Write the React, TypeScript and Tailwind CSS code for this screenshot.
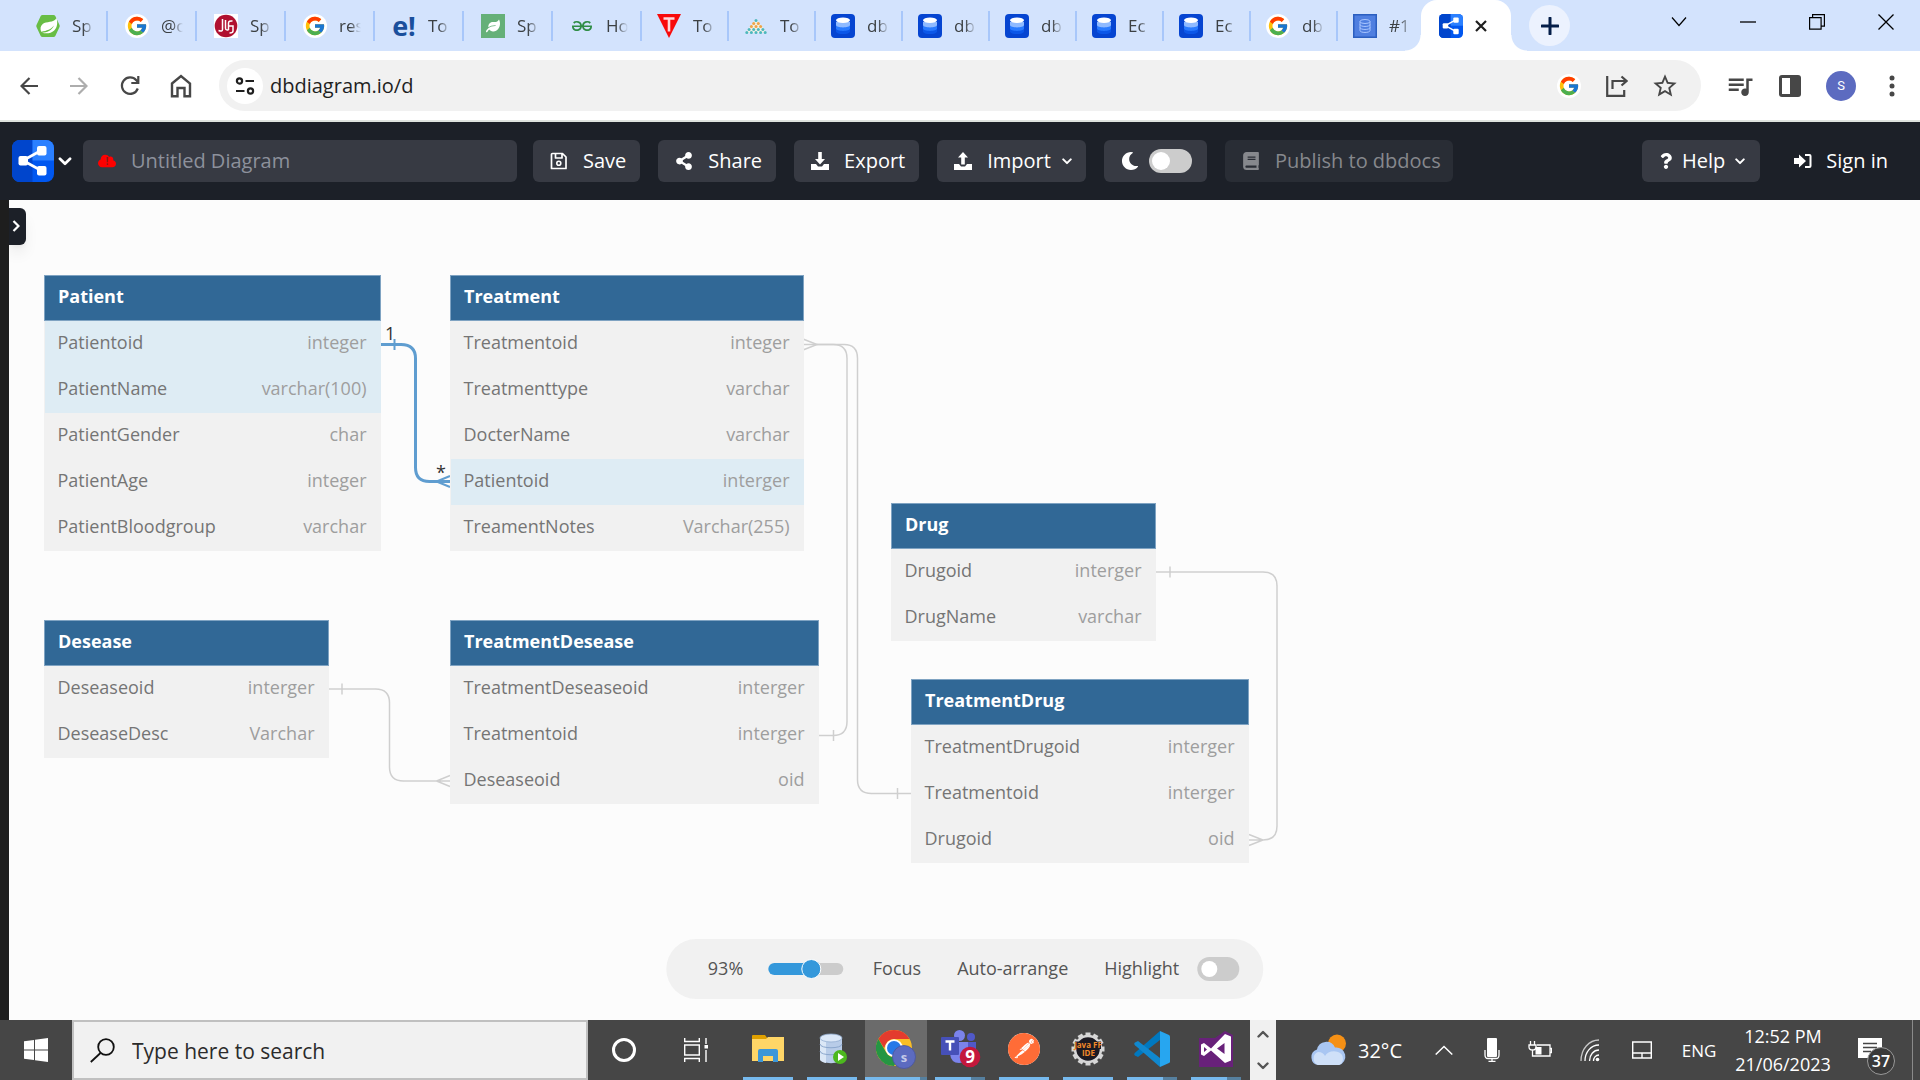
import React from "react";
import { FcGoogle } from "react-icons/fc";
import { SiGeeksforgeeks, SiPostman } from "react-icons/si";
import {
  FaShareAlt,
  FaMoon,
  FaCloud,
  FaBook,
  FaQuestion,
  FaLeaf,
} from "react-icons/fa";
import { MdQueueMusic, MdStarBorder } from "react-icons/md";

/* ---------- Icons ---------- */

function DiagramLogo({ className }: { className: string }) {
  return (
    <svg viewBox="0 0 42 42" className={className} aria-hidden="true">
      <clipPath id="logoClip">
        <rect width="42" height="42" rx="8" />
      </clipPath>
      <g clipPath="url(#logoClip)">
        <rect width="42" height="42" fill="#0057f0" />
        <rect width="20.5" height="42" fill="#0045cc" />
        <rect x="20.5" width="21.5" height="20.5" fill="#2b80ff" />
      </g>
      <path d="M11 20.5 30 10M11 20.5 30 31" stroke="#fff" strokeWidth="2.6" />
      <rect x="6.5" y="16" width="9.5" height="9.5" rx="2" fill="#fff" />
      <rect x="25" y="6" width="9.5" height="9.5" rx="2" fill="#fff" />
      <rect x="25" y="26" width="9.5" height="9.5" rx="2" fill="#fff" />
    </svg>
  );
}

function GoogleMark() {
  return (
    <span className="flex size-6 items-center justify-center rounded-full bg-white">
      <FcGoogle className="size-[22px]" />
    </span>
  );
}

function SpringMark() {
  return (
    <svg viewBox="0 0 24 24" className="size-6" aria-hidden="true">
      <path d="M6.500 1h11q1.200 0 1.800 1l4.200 9q.5 1 0 2l-4.200 9q-.6 1-1.800 1h-11q-1.200 0-1.800-1L.5 13q-.5-1 0-2l4.200-9q.6-1 1.800-1z" fill="#68bd45" />
      <path d="M20.500 4c1.400 4.500.8 9.500-2.300 12.500-3.300 3.200-8 3.300-12.200 2.300 5-.3 9.800-2.300 12-7.300-3 3.800-7 5.300-12.800 6.200-1.200-2.700-.9-5.700 1.500-7.700 3.800-3.200 10.800-.5 13.800-6z" fill="#fff" />
    </svg>
  );
}

function JavaGuidesMark() {
  return (
    <svg viewBox="0 0 24 24" className="size-6" aria-hidden="true">
      <rect width="24" height="24" fill="#fff" />
      <circle cx="12" cy="12" r="11.300" fill="#b01030" />
      <g fill="none" stroke="#fff" strokeWidth="1.500">
        <path d="M8.500 5v10.500q0 2.300-4 1M11.500 6v8M14.500 16V9q0-2.500 4-2M11.500 14q0 2.500 3 2M14.500 12H19v5q0 2-3.500 2" />
      </g>
    </svg>
  );
}

function EdurekaMark() {
  return (
    <span className="flex size-6 items-center justify-center font-['Open_Sans',sans-serif] text-[27px] leading-[24px] font-bold text-[#1a4f9c]">
      e!
    </span>
  );
}

function LeafMark() {
  return (
    <span className="flex size-6 items-center justify-center bg-[#65b078]">
      <FaLeaf className="size-3.5 text-white" />
    </span>
  );
}

function TMark() {
  return (
    <svg viewBox="0 0 24 24" className="size-6" aria-hidden="true">
      <path d="M0 0h24L12 24z" fill="#f80a0a" />
      <path d="M6.500 4.500h11M12 4.500v13" stroke="#ffd9d9" strokeWidth="2.600" />
    </svg>
  );
}

function PyramidMark() {
  const rows = [1, 2, 3, 4, 5];
  return (
    <svg viewBox="0 0 24 24" className="size-6" aria-hidden="true">
      <path d="M12 5 1 19h22z" fill="#f2efe6" />
      {rows.map((n) =>
        Array.from({ length: n }, (_, i) => (
          <circle
            key={n + "-" + i}
            cx={12 + (i - (n - 1) / 2) * 4.6}
            cy={3.5 + n * 3}
            r="1.500"
            fill={n === 2 || n === 3 ? "#eea548" : "#4db8bd"}
          />
        )),
      )}
    </svg>
  );
}

function DbMark() {
  return (
    <svg viewBox="0 0 24 24" className="size-6" aria-hidden="true">
      <rect width="24" height="24" rx="4" fill="#0645d1" />
      <path d="M5 14v3.500c0 3.400 14 3.400 14 0V14z" fill="#0c57e8" />
      <path d="M5 11v3.500c0 3.200 14 3.200 14 0V11z" fill="#2a7bff" />
      <path d="M5 8v3c0 3.200 14 3.200 14 0V8z" fill="#8fbaff" />
      <ellipse cx="12" cy="6.300" rx="7" ry="2.800" fill="#fff" />
    </svg>
  );
}

function DbOutlineMark() {
  return (
    <svg viewBox="0 0 24 24" className="size-6" aria-hidden="true">
      <rect x=".75" y=".75" width="22.500" height="22.500" fill="#4f7fe0" stroke="#2b5fc0" strokeWidth="1.500" />
      <g fill="none" stroke="#a9c6ff" strokeWidth="1">
        <ellipse cx="12" cy="7.500" rx="5" ry="2" />
        <path d="M7 7.500v9c0 2.600 10 2.600 10 0v-9M7 10.500c0 2.600 10 2.600 10 0M7 13.500c0 2.600 10 2.600 10 0" />
      </g>
    </svg>
  );
}

function Chevron({ className }: { className: string }) {
  return (
    <svg viewBox="0 0 12 8" className={className} aria-hidden="true">
      <path d="M1.500 1.500 6 6l4.500-4.500" fill="none" stroke="currentColor" strokeWidth="2.400" strokeLinecap="round" strokeLinejoin="round" />
    </svg>
  );
}

function SaveIcon() {
  return (
    <svg viewBox="0 0 18 18" className="size-[18px]" aria-hidden="true">
      <path d="M2.500 1.500h10l3.500 3.500v11.500h-14.500v-14q0-1 1-1zM5.500 1.500v4.500h6.500v-4.500" fill="none" stroke="currentColor" strokeWidth="1.700" strokeLinejoin="round" />
      <circle cx="8.800" cy="11.200" r="2" fill="none" stroke="currentColor" strokeWidth="1.600" />
    </svg>
  );
}

function TransferIcon({ up }: { up?: boolean }) {
  return (
    <svg viewBox="0 0 18 18" className="size-[18px]" aria-hidden="true">
      <path d="M0 12h5l2 2.500h4l2-2.500h5v6H0z" fill="currentColor" />
      {up ? (
        <path d="M9 0 4 5.500h3.200v7h3.600v-7H14z" fill="currentColor" />
      ) : (
        <path d="M9 12.500 4 7h3.200V0h3.600v7H14z" fill="currentColor" />
      )}
    </svg>
  );
}

function SignInIcon() {
  return (
    <svg viewBox="0 0 18 18" className="size-[18px]" aria-hidden="true">
      <path d="M0 6h5V2.500L12 9l-7 6.500V12H0z" fill="currentColor" />
      <path d="M11 3h4.500q1 0 1 1v10q0 1-1 1H11" fill="none" stroke="currentColor" strokeWidth="2" />
    </svg>
  );
}

/* ---------- Browser chrome ---------- */

const wideTabs = [
  { label: "Sp", icon: <SpringMark /> },
  { label: "@o", icon: <GoogleMark /> },
  { label: "Sp", icon: <JavaGuidesMark /> },
  { label: "res", icon: <GoogleMark /> },
  { label: "To", icon: <EdurekaMark /> },
  { label: "Sp", icon: <LeafMark /> },
  { label: "Ho", icon: <SiGeeksforgeeks className="mx-0.5 h-6 w-5 text-[#2f8d46]" /> },
];

const narrowTabs = [
  { label: "To", icon: <TMark /> },
  { label: "To", icon: <PyramidMark /> },
  { label: "db", icon: <DbMark /> },
  { label: "db", icon: <DbMark /> },
  { label: "db", icon: <DbMark /> },
  { label: "Ec", icon: <DbMark /> },
  { label: "Ec", icon: <DbMark /> },
  { label: "db", icon: <GoogleMark /> },
];

function TabBody({ label, icon }: { label: string; icon: React.ReactNode }) {
  return (
    <>
      <span className="size-6 shrink-0">{icon}</span>
      <span className="w-[22px] overflow-hidden text-left text-[17px] whitespace-nowrap text-[#3c4043] [mask-image:linear-gradient(to_right,black_50%,transparent)]">
        {label}
      </span>
    </>
  );
}

function TabStrip() {
  return (
    <div className="flex h-[51px] items-center bg-[#d3e3fd] pl-[19px]">
      {wideTabs.map((t, i) => (
        <button key={i} className="flex h-[30px] w-[89px] shrink-0 items-center gap-3 border-r-2 border-[#a8c7fa] pl-[17px]">
          <TabBody label={t.label} icon={t.icon} />
        </button>
      ))}
      {narrowTabs.map((t, i) => (
        <button key={i} className="flex h-[30px] w-[87px] shrink-0 items-center gap-3 border-r-2 border-[#a8c7fa] pl-[15px]">
          <TabBody label={t.label} icon={t.icon} />
        </button>
      ))}
      <button className="flex h-[30px] w-[83px] shrink-0 items-center gap-3 pl-[15px]">
        <TabBody label="#1" icon={<DbOutlineMark />} />
      </button>
      <div className="relative flex h-full w-[90px] shrink-0 items-center gap-3 rounded-t-2xl bg-white pl-[18px]">
        <span className="absolute bottom-0 -left-4 size-4 bg-[radial-gradient(circle_at_0_0,transparent_15px,white_16px)]" />
        <span className="absolute -right-4 bottom-0 size-4 bg-[radial-gradient(circle_at_100%_0,transparent_15px,white_16px)]" />
        <DiagramLogo className="size-6" />
        <button aria-label="Close tab" className="text-[#1f1f1f]">
          <svg viewBox="0 0 12 12" className="size-3">
            <path d="m1 1 10 10M11 1 1 11" stroke="currentColor" strokeWidth="2.200" />
          </svg>
        </button>
      </div>
      <button aria-label="New tab" className="ml-[18px] flex size-[41px] shrink-0 items-center justify-center rounded-full bg-[#ecf2fe]">
        <svg viewBox="0 0 18 18" className="size-[18px]">
          <path d="M9 1v16M1 9h16" stroke="#041e49" strokeWidth="3" strokeLinecap="round" />
        </svg>
      </button>
      <div className="ml-auto flex h-full items-start pt-3 text-black">
        <button aria-label="Search tabs" className="flex h-5 w-[69px] items-center justify-center">
          <svg viewBox="0 0 16 10" className="h-2.5 w-4"><path d="m1 .5 7 8 7-8" fill="none" stroke="currentColor" strokeWidth="1.200" /></svg>
        </button>
        <button aria-label="Minimize" className="flex h-5 w-[69px] items-center justify-center">
          <svg viewBox="0 0 16 16" className="size-4"><path d="M0 8h16" stroke="currentColor" strokeWidth="1.300" /></svg>
        </button>
        <button aria-label="Restore" className="flex h-5 w-[69px] items-center justify-center">
          <svg viewBox="0 0 16 16" className="size-4"><path d="M.6 3.600h11.500v11.500H.6zM3.600 3.600V.6h11.800v11.500h-3.400" fill="none" stroke="currentColor" strokeWidth="1.200" /></svg>
        </button>
        <button aria-label="Close window" className="flex h-5 w-[69px] items-center justify-center">
          <svg viewBox="0 0 16 16" className="size-4"><path d="m.5.5 15 15M15.500.5l-15 15" stroke="currentColor" strokeWidth="1.300" /></svg>
        </button>
      </div>
    </div>
  );
}

function AddressBar() {
  return (
    <div className="flex h-[71px] items-center border-b-2 border-[#dfe3df] bg-white pr-[3px] pl-1 text-[#474747]">
      <button aria-label="Back" className="flex w-[50px] justify-center">
        <svg viewBox="0 0 18 18" className="size-[18px]"><path d="M18 9H1.500M9.500 1l-8 8 8 8" fill="none" stroke="currentColor" strokeWidth="2.200" /></svg>
      </button>
      <button aria-label="Forward" className="flex w-[50px] justify-center text-[#adadad]" disabled>
        <svg viewBox="0 0 18 18" className="size-[18px]"><path d="M0 9h16.500M8.500 1l8 8-8 8" fill="none" stroke="currentColor" strokeWidth="2.200" /></svg>
      </button>
      <button aria-label="Reload" className="flex w-[52px] justify-center">
        <svg viewBox="0 0 20 20" className="size-5"><path d="M17.800 12.500a8.200 8.200 0 1 1-1.500-8.200l2 2.300M18.300 0v7h-7" fill="none" stroke="currentColor" strokeWidth="2.200" /></svg>
      </button>
      <button aria-label="Home" className="flex w-[50px] justify-center">
        <svg viewBox="0 0 22 24" className="h-6 w-[22px]"><path d="M2 9.500 11 2l9 7.500v12.700h-5.500V14h-7v8.200H2z" fill="none" stroke="currentColor" strokeWidth="2.400" /></svg>
      </button>
      <div className="ml-[13px] flex h-[51px] flex-1 items-center rounded-full bg-[#f1f1f1] pr-3 pl-2">
        <button aria-label="View site information" className="flex size-9 shrink-0 items-center justify-center rounded-full bg-white">
          <svg viewBox="0 0 20 18" className="h-[18px] w-5">
            <g fill="none" stroke="#1f1f1f" strokeWidth="2.200">
              <circle cx="4.500" cy="4" r="2.600" />
              <path d="M10.500 4H19M1 14h8.500" />
              <circle cx="15.500" cy="14" r="2.600" />
            </g>
          </svg>
        </button>
        <input aria-label="Address" defaultValue="dbdiagram.io/d" className="ml-[7px] min-w-0 flex-1 bg-transparent font-['Open_Sans',sans-serif] text-[20px] text-[#1f1f1f] outline-none" />
        <button aria-label="Search with Google" className="flex w-12 justify-center"><GoogleMark /></button>
        <button aria-label="Share page" className="flex w-12 justify-center">
          <svg viewBox="0 0 22 22" className="size-[22px]"><path d="M1.200 1v19.800h17V15M6.500 14V6H20M15.500 1.500 20.500 6l-5 4.500" fill="none" stroke="currentColor" strokeWidth="2.200" /></svg>
        </button>
        <button aria-label="Bookmark" className="flex w-12 justify-center"><MdStarBorder className="size-[28px]" /></button>
      </div>
      <button aria-label="Media controls" className="ml-3.5 flex w-[50px] justify-center"><MdQueueMusic className="size-[30px]" /></button>
      <button aria-label="Side panel" className="flex w-[50px] justify-center">
        <svg viewBox="0 0 22 22" className="size-[22px]"><rect width="22" height="22" rx="3" fill="currentColor" /><rect x="3" y="3" width="8" height="16" fill="#fff" /></svg>
      </button>
      <button aria-label="Profile" className="mx-[11px] flex size-[30px] items-center justify-center rounded-full bg-[#5c6bc0] font-['Roboto',sans-serif] text-[13px] text-white">S</button>
      <button aria-label="Menu" className="flex w-[50px] justify-center">
        <svg viewBox="0 0 6 22" className="h-[22px] w-1.5"><g fill="currentColor"><circle cx="3" cy="3" r="2.500" /><circle cx="3" cy="11" r="2.500" /><circle cx="3" cy="19" r="2.500" /></g></svg>
      </button>
    </div>
  );
}

/* ---------- Application header ---------- */

const headerButton =
  "flex h-[42px] shrink-0 items-center gap-[15px] rounded-md bg-[#373a43] pr-[14px] pl-[17px] text-white";

function AppHeader() {
  return (
    <header className="flex h-[78px] items-center bg-[#1c2028] pr-4 pl-3 font-['Open_Sans',sans-serif] text-[20px] font-medium">
      <button aria-label="dbdiagram menu" className="flex shrink-0 items-center gap-1 text-white">
        <DiagramLogo className="size-[42px]" />
        <Chevron className="h-[9px] w-3.5" />
      </button>
      <label className="ml-[11px] flex h-[42px] w-[434px] items-center rounded-md bg-[#373a43] pl-[15px]">
        <span className="relative flex shrink-0 items-center justify-center">
          <FaCloud className="size-[18px] text-[#f00]" />
          <span className="absolute text-[10px] leading-[18px] font-bold text-[#8c1a1a]">!</span>
        </span>
        <input aria-label="Diagram name" placeholder="Untitled Diagram" className="ml-[15px] min-w-0 flex-1 bg-transparent font-normal outline-none placeholder:text-[#8d919c]" />
      </label>
      <div className="ml-4 flex gap-[18px]">
        <button className={headerButton}><SaveIcon />Save</button>
        <button className={headerButton}><FaShareAlt className="size-[18px]" />Share</button>
        <button className={headerButton}><TransferIcon />Export</button>
        <button className={headerButton}>
          <TransferIcon up />
          <span>Import</span>
          <Chevron className="-ml-1 h-[7px] w-2.5" />
        </button>
        <label className="flex h-[42px] items-center gap-2.5 rounded-md bg-[#373a43] pr-[15px] pl-[17px] text-white">
          <FaMoon className="size-[18px]" />
          <input type="checkbox" role="switch" aria-label="Dark mode" className="h-6 w-[43px] appearance-none rounded-full bg-[#ccc] before:mt-[3px] before:ml-[3px] before:block before:size-[18px] before:rounded-full before:bg-white" />
        </label>
        <button disabled className="flex h-[42px] shrink-0 items-center gap-[15px] rounded-md bg-[#292d35] pr-3 pl-[17px] font-normal text-[#86888d]">
          <FaBook className="size-[18px]" />Publish to dbdocs
        </button>
      </div>
      <div className="ml-auto flex gap-[18px]">
        <button className="flex h-[42px] items-center gap-2.5 rounded-md bg-[#373a43] pr-[15px] pl-[18px] text-white">
          <FaQuestion className="h-4 w-3" />
          <span>Help</span>
          <Chevron className="h-[7px] w-2.5" />
        </button>
        <a href="#signin" className="flex h-[42px] items-center gap-[14px] px-4 text-white">
          <SignInIcon />Sign in
        </a>
      </div>
    </header>
  );
}

/* ---------- Diagram canvas ---------- */

type Row = [name: string, type: string, active?: boolean];
type Entity = { name: string; x: number; y: number; w: number; rows: Row[] };

const entities: Entity[] = [
  {
    name: "Patient", x: 35, y: 75, w: 337,
    rows: [
      ["Patientoid", "integer", true],
      ["PatientName", "varchar(100)", true],
      ["PatientGender", "char"],
      ["PatientAge", "integer"],
      ["PatientBloodgroup", "varchar"],
    ],
  },
  {
    name: "Treatment", x: 441, y: 75, w: 354,
    rows: [
      ["Treatmentoid", "integer"],
      ["Treatmenttype", "varchar"],
      ["DocterName", "varchar"],
      ["Patientoid", "interger", true],
      ["TreamentNotes", "Varchar(255)"],
    ],
  },
  {
    name: "Desease", x: 35, y: 420, w: 285,
    rows: [["Deseaseoid", "interger"], ["DeseaseDesc", "Varchar"]],
  },
  {
    name: "TreatmentDesease", x: 441, y: 420, w: 369,
    rows: [
      ["TreatmentDeseaseoid", "interger"],
      ["Treatmentoid", "interger"],
      ["Deseaseoid", "oid"],
    ],
  },
  {
    name: "Drug", x: 882, y: 303, w: 265,
    rows: [["Drugoid", "interger"], ["DrugName", "varchar"]],
  },
  {
    name: "TreatmentDrug", x: 902, y: 479, w: 338,
    rows: [
      ["TreatmentDrugoid", "interger"],
      ["Treatmentoid", "interger"],
      ["Drugoid", "oid"],
    ],
  },
];

function EntityTable({ entity }: { entity: Entity }) {
  return (
    <table
      className="absolute border-collapse bg-[#f1f1f1] text-[18px] leading-6 text-[#757575]"
      style={{ left: entity.x, top: entity.y, width: entity.w }}
    >
      <thead>
        <tr className="h-[45px] border border-[#7fa3c2] bg-[#316896]">
          <th colSpan={2} className="px-[13px] pb-1 text-left font-bold text-white">{entity.name}</th>
        </tr>
      </thead>
      <tbody>
        {entity.rows.map(([name, type, active]) => (
          <tr key={name} className={active ? "h-[46px] bg-[#deecf4]" : "h-[46px]"}>
            <td className="pb-1 pl-[13px]">{name}</td>
            <td className="pr-3.5 pb-1 text-right text-[#9e9e9e]">{type}</td>
          </tr>
        ))}
      </tbody>
    </table>
  );
}

function Relations() {
  return (
    <svg className="absolute inset-0 size-full" aria-hidden="true">
      <g fill="none" stroke="#cfcfcf" strokeWidth="1.500">
        <path d="M794 144.500h30q14 0 14 14v363q0 14-14 14h-14" />
        <path d="M794 139l14 5.500-14 5.500M824.500 530v11" />
        <path d="M808 144.500h27q13.500 0 13.500 14v421q0 14 14 14h40M888.500 588v11" />
        <path d="M319 489h47.500q14 0 14 14v64q0 14 14 14H441M333 483.500v11M441 575.500l-13.500 5.500 13.500 5.500" />
        <path d="M1147 372h107q14 0 14 14v240q0 14-14 14h-14M1161 366.500v11M1240 634.500l14 5.500-14 5.500" />
      </g>
      <g fill="none" stroke="#5f9dd0" strokeWidth="3">
        <path d="M372 144.500h20q14.500 0 14.500 14v109q0 14 14 14H441" />
        <path d="M385.500 139v11M441 276l-13.500 5.500 13.500 5.500" strokeWidth="2" />
      </g>
    </svg>
  );
}

function Canvas() {
  return (
    <main className="flex flex-1 font-['Open_Sans',sans-serif]">
      <div className="w-[9px] shrink-0 bg-[#1e1e1e]" />
      <div className="relative flex-1 overflow-hidden bg-[#fcfcfc]">
        <button aria-label="Expand editor" className="absolute top-2 left-0 flex h-[37px] w-[17px] items-center rounded-r-md bg-[#1c2028] pb-0.5 pl-[3px] text-white shadow-lg">
          <svg viewBox="0 0 8 12" className="h-3 w-2"><path d="m1.500 1 5 5-5 5" fill="none" stroke="currentColor" strokeWidth="2.200" /></svg>
        </button>
        <Relations />
        {entities.map((e) => (
          <EntityTable key={e.name} entity={e} />
        ))}
        <span className="absolute top-[121px] left-[376px] text-[18px] leading-6 text-[#333]">1</span>
        <span className="absolute top-[260px] left-[427px] text-[18px] leading-6 text-[#333]">*</span>
        <div className="absolute bottom-[21px] left-1/2 flex h-[60px] -translate-x-1/2 items-center rounded-full bg-[#f1f1f1] pr-6 pl-[42px] text-[18px] whitespace-nowrap text-[#555]">
          <label htmlFor="zoom" className="w-[60px] pb-0.5">93%</label>
          <input
            id="zoom"
            type="range"
            defaultValue={60}
            className="h-5 w-[75px] appearance-none bg-transparent [&::-webkit-slider-runnable-track]:h-3 [&::-webkit-slider-runnable-track]:rounded-full [&::-webkit-slider-runnable-track]:bg-[linear-gradient(to_right,#3498db_57%,#ccc_57%)] [&::-webkit-slider-thumb]:-mt-1 [&::-webkit-slider-thumb]:size-5 [&::-webkit-slider-thumb]:appearance-none [&::-webkit-slider-thumb]:rounded-full [&::-webkit-slider-thumb]:border [&::-webkit-slider-thumb]:border-white [&::-webkit-slider-thumb]:bg-[#3498db]"
          />
          <button className="ml-[30px] pb-0.5">Focus</button>
          <button className="ml-9 pb-0.5">Auto-arrange</button>
          <label className="ml-9 flex items-center gap-[18px]">
            <span className="pb-0.5">Highlight</span>
            <input type="checkbox" role="switch" className="h-6 w-[42px] appearance-none rounded-full bg-[#ccc] before:mt-1 before:ml-1 before:block before:size-4 before:rounded-full before:bg-white" />
          </label>
        </div>
      </div>
    </main>
  );
}

/* ---------- Taskbar ---------- */

function FolderIcon() {
  return (
    <svg viewBox="0 0 32 28" className="h-7 w-8" aria-hidden="true">
      <path d="M0 1q0-1 1-1h12l3 4H0z" fill="#dfa000" />
      <path d="M0 4h14l2-2h16v24H0z" fill="#ffd667" />
      <path d="M6 27V16q0-2 2-2h16q2 0 2 2v11h-5v-6H11v6z" fill="#3d97d8" />
    </svg>
  );
}

function DatabaseRunIcon() {
  return (
    <svg viewBox="0 0 28 32" className="ml-0.5 h-8 w-7" aria-hidden="true">
      <path d="M1 5v21c0 5.500 22 5.500 22 0V5z" fill="#b8cce8" />
      <path d="M1 5v21c0 2 3 3.500 6 4V5z" fill="#dbe7f6" />
      <ellipse cx="12" cy="5" rx="11" ry="4" fill="#dce8f8" stroke="#93add0" strokeWidth=".8" />
      <path d="M1 11c0 5 22 5 22 0M1 18c0 5 22 5 22 0" fill="none" stroke="#8ba7cd" strokeWidth="1" />
      <circle cx="21" cy="24" r="7" fill="#4cb81e" />
      <path d="m19 20 6 4-6 4z" fill="#fff" />
    </svg>
  );
}

function ChromeIcon() {
  return (
    <svg viewBox="0 0 40 40" className="size-10" aria-hidden="true">
      <circle cx="18" cy="19" r="18" fill="#fbbf25" />
      <path d="M2.400 10a18 18 0 0 1 31.200 0H18a9 9 0 0 0-7.800 4.500L8 19z" fill="#e33b2e" />
      <path d="M2.400 10A18 18 0 0 0 18 37l8-13.500-8 4.500a9 9 0 0 1-7.800-4.500z" fill="#259543" />
      <circle cx="18" cy="19" r="8.800" fill="#fff" />
      <circle cx="18" cy="19" r="7" fill="#2779e8" />
      <circle cx="28" cy="28" r="11.500" fill="#5c6bc0" stroke="#4a569c" strokeWidth=".8" />
      <text x="28" y="32.500" textAnchor="middle" fontFamily="Open Sans, sans-serif" fontWeight="700" fontSize="13" fill="#c5cae9">s</text>
    </svg>
  );
}

function TeamsIcon() {
  return (
    <svg viewBox="0 0 40 38" className="ml-0.5 h-[38px] w-10" aria-hidden="true">
      <circle cx="30" cy="7" r="4" fill="#5059c9" />
      <circle cx="18.500" cy="5.500" r="5.500" fill="#7b83eb" />
      <path d="M25 12h10v10q-1 7-8 7z" fill="#5059c9" />
      <path d="M9 12h18v12q-1 9-9 9-8 0-9-9z" fill="#7b83eb" />
      <rect y="7" width="18" height="18" rx="1" fill="#4650b8" />
      <path d="M4.500 11.500h9M9 11.500v9" stroke="#fff" strokeWidth="2.400" />
      <circle cx="29" cy="27" r="10.300" fill="#c4183c" />
      <text x="29" y="33" textAnchor="middle" fontFamily="Open Sans, sans-serif" fontWeight="700" fontSize="17" fill="#fff">9</text>
    </svg>
  );
}

function JavaIdeIcon() {
  const teeth = Array.from({ length: 12 }, (_, i) => i * 30);
  return (
    <svg viewBox="0 0 34 34" className="size-[34px] overflow-visible" aria-hidden="true">
      {teeth.map((a) => (
        <rect key={a} x="14.500" y="0.500" width="5" height="8" fill="#d6d6d6" transform={`rotate(${a} 17 17)`} />
      ))}
      <circle cx="17" cy="17" r="13" fill="#1c1a22" stroke="#d6d6d6" strokeWidth="2.500" />
      <rect x="4" y="9.500" width="26" height="7.500" fill="#1c1a22" />
      <g fontFamily="Open Sans, sans-serif" fontWeight="700" fill="#f0892a" textAnchor="middle">
        <text x="17" y="16" fontSize="8">Java FF</text>
        <text x="17.500" y="24" fontSize="8">IDE</text>
      </g>
    </svg>
  );
}

function VsCodeIcon() {
  return (
    <svg viewBox="0 0 36 36" className="size-9" aria-hidden="true">
      <path d="M26 9 4 26 1 24.500q-1.500-1.200 0-2.700L26 0z" fill="#0078bf" />
      <path d="M26 27 4 10 1 11.500q-1.500 1.200 0 2.700L26 36z" fill="#1088cf" />
      <path d="M26 0l9 4q1 .5 1 1.500v25q0 1-1 1.500l-9 4z" fill="#27a6f0" />
    </svg>
  );
}

function VisualStudioIcon() {
  return (
    <svg viewBox="0 0 34 36" className="h-9 w-[34px]" aria-hidden="true">
      <path d="M0 7h16l10-7 8 4v32H0z" fill="#68217a" />
      <path d="m5 12 7 5.500L26 3l6 2.500v24L26 32 12 19.500 5 25l-3-1.500v-10z" fill="#fff" />
      <path d="M5 16v5l3-2.500zM25.500 12v11L18 17.500z" fill="#68217a" />
    </svg>
  );
}

const taskApps = [
  { name: "File Explorer", icon: <FolderIcon /> },
  { name: "Database", icon: <DatabaseRunIcon /> },
  { name: "Chrome", icon: <ChromeIcon />, active: true, stacked: true },
  { name: "Teams", icon: <TeamsIcon />, stacked: true },
  { name: "Postman", icon: <span className="flex size-8 items-center justify-center rounded-full bg-white"><SiPostman className="size-8 text-[#ff6c37]" /></span> },
  { name: "Java FF IDE", icon: <JavaIdeIcon /> },
  { name: "Visual Studio Code", icon: <VsCodeIcon />, stacked: true },
  { name: "Visual Studio", icon: <VisualStudioIcon />, stacked: true },
];

function Taskbar() {
  return (
    <footer className="flex h-[60px] bg-[#464646] font-['Open_Sans',sans-serif] text-white">
      <button aria-label="Start" className="flex w-[72px] shrink-0 items-center justify-center">
        <svg viewBox="0 0 24 24" className="size-6"><path d="M0 3.300 10 2v9.500H0zM11 1.800 24 0v11.500H11zM0 12.500h10V22L0 20.700zM11 12.500h13V24l-13-1.800z" fill="#fff" /></svg>
      </button>
      <label className="flex w-[516px] shrink-0 items-center border-2 border-[#c0c0c0] bg-[#f1f1f1] pl-4">
        <svg viewBox="0 0 25 25" className="size-[25px] shrink-0" aria-hidden="true"><circle cx="16" cy="9" r="7.800" fill="none" stroke="#111" strokeWidth="1.800" /><path d="M10.500 15 .8 24" stroke="#111" strokeWidth="1.800" /></svg>
        <input aria-label="Search" placeholder="Type here to search" className="ml-[17px] min-w-0 flex-1 bg-transparent pt-1 text-[21px] outline-none placeholder:text-[#2b2b2b]" />
      </label>
      <button aria-label="Cortana" className="flex w-[72px] items-center justify-center">
        <span className="size-6 rounded-full border-[3px] border-white" />
      </button>
      <button aria-label="Task view" className="flex w-[72px] items-center justify-center">
        <svg viewBox="0 0 24 24" className="size-6"><path d="M.7 0v3.500h14.600V0M.7 7h14.600v10H.7zM.7 24v-3.500h14.600V24M22 0v6M22 12v12" fill="none" stroke="#fff" strokeWidth="1.400" /><rect x="20.500" y="7" width="3.500" height="3.500" fill="#fff" /></svg>
      </button>
      <div className="ml-[11px] flex gap-3.5">
        {taskApps.map((a) => (
          <button
            key={a.name}
            aria-label={a.name}
            className={a.active ? "-mx-1.5 flex w-[62px] flex-col bg-[#6b6b6b]" : "flex w-[50px] flex-col"}
          >
            <span className="flex w-full flex-1 items-center justify-center">{a.icon}</span>
            <span className="flex h-[3px] w-full">
              <span className="flex-1 bg-[#76b9ed]" />
              {a.stacked && <span className={a.active ? "w-[7px] bg-[#56809f]" : "w-3.5 bg-[#56809f]"} />}
            </span>
          </button>
        ))}
      </div>
      <div className="ml-[9px] flex w-[26px] shrink-0 flex-col items-center justify-between bg-[#f0f0f0] py-2.5 text-[#555]">
        <button aria-label="Scroll up"><Chevron className="h-2 w-3 rotate-180" /></button>
        <button aria-label="Scroll down"><Chevron className="h-2 w-3" /></button>
      </div>
      <div className="ml-auto flex shrink-0 items-center text-[18px]">
        <button className="flex w-[110px] items-center gap-2.5">
          <svg viewBox="0 0 38 32" className="h-8 w-[38px]" aria-hidden="true">
            <circle cx="27" cy="9.500" r="9" fill="#f59015" />
            <path d="M8 31a8 8 0 0 1-1-15.500A9.500 9.500 0 0 1 25 13.500 9 9 0 0 1 29 31z" fill="#a9c6f2" />
            <path d="M8 31a7 7 0 0 1 0-13c4 0 6 2 7 4 2-4 8-6 13-4a7 7 0 0 1 1 13z" fill="#cfe0f8" />
          </svg>
          <span className="pt-0.5 text-[20px]">32°C</span>
        </button>
        <button aria-label="Show hidden icons" className="flex w-12 justify-center">
          <svg viewBox="0 0 18 10" className="h-2.5 w-[18px]"><path d="m.7 9.500 8.300-8 8.300 8" fill="none" stroke="#fff" strokeWidth="1.500" /></svg>
        </button>
        <button aria-label="Microphone" className="flex w-12 justify-center">
          <svg viewBox="0 0 16 24" className="h-6 w-4"><rect x="3" width="10" height="19" rx="1" fill="#fff" /><path d="M1 12v5q0 3.500 3 3.500h8q3 0 3-3.500v-5M8 20.500V24M4.500 23.300h7" fill="none" stroke="#fff" strokeWidth="1.300" /></svg>
        </button>
        <button aria-label="Battery" className="flex w-12 justify-center">
          <svg viewBox="0 0 24 18" className="h-[18px] w-6"><path d="M2.500 0v4M6.500 0v4M1 4h7v2q0 3-3.500 3T1 6zM4.500 9v6H22V4H9M22 7.500h1.500v4H22" fill="none" stroke="#fff" strokeWidth="1.300" /><rect x="7.500" y="6" width="6" height="7.500" fill="#fff" /></svg>
        </button>
        <button aria-label="Network" className="flex w-[52px] justify-center">
          <svg viewBox="0 0 20 24" className="h-6 w-5"><g fill="none" stroke="#fff" strokeWidth="1.300"><path d="M1 23C1 11 9 2 19 2" opacity=".7" /><path d="M5 23C5 14 11 7 19 7M9.500 23c0-6 4-11 9.500-11M13.500 23c0-3 2-6 5.500-6" /></g><circle cx="17.500" cy="21.500" r="1.800" fill="#fff" /></svg>
        </button>
        <button aria-label="Touchpad" className="flex w-[52px] justify-center">
          <svg viewBox="0 0 20 18" className="h-[18px] w-5"><path d="M.7 1h18.600v16H.7zM.7 12h18.600M10 12v5" fill="none" stroke="#fff" strokeWidth="1.400" /></svg>
        </button>
        <button className="w-[62px] pt-0.5 text-center text-[17px]">ENG</button>
        <button className="w-[106px] text-center leading-7 whitespace-nowrap">
          12:52 PM
          <br />
          21/06/2023
        </button>
        <button aria-label="Notifications, 37 new" className="relative flex h-full w-[76px] items-center justify-center">
          <svg viewBox="0 0 24 24" className="mr-2 size-6"><path d="M0 0h24v20h-9l-5 4v-4H0z" fill="#fff" /><path d="M5 5.500h14M5 9.500h14M5 13.500h8" stroke="#464646" strokeWidth="1.500" /></svg>
          <span className="absolute top-[27px] left-[31px] flex size-7 items-center justify-center rounded-full border border-[#999] bg-[#3a3a3a] text-[16px] font-semibold">37</span>
        </button>
        <span className="h-full w-2 border-l border-[#8a8a8a]" />
      </div>
    </footer>
  );
}

export default function App() {
  return (
    <div className="flex min-h-screen flex-col overflow-hidden font-['Open_Sans',sans-serif]">
      <TabStrip />
      <AddressBar />
      <AppHeader />
      <Canvas />
      <Taskbar />
    </div>
  );
}
